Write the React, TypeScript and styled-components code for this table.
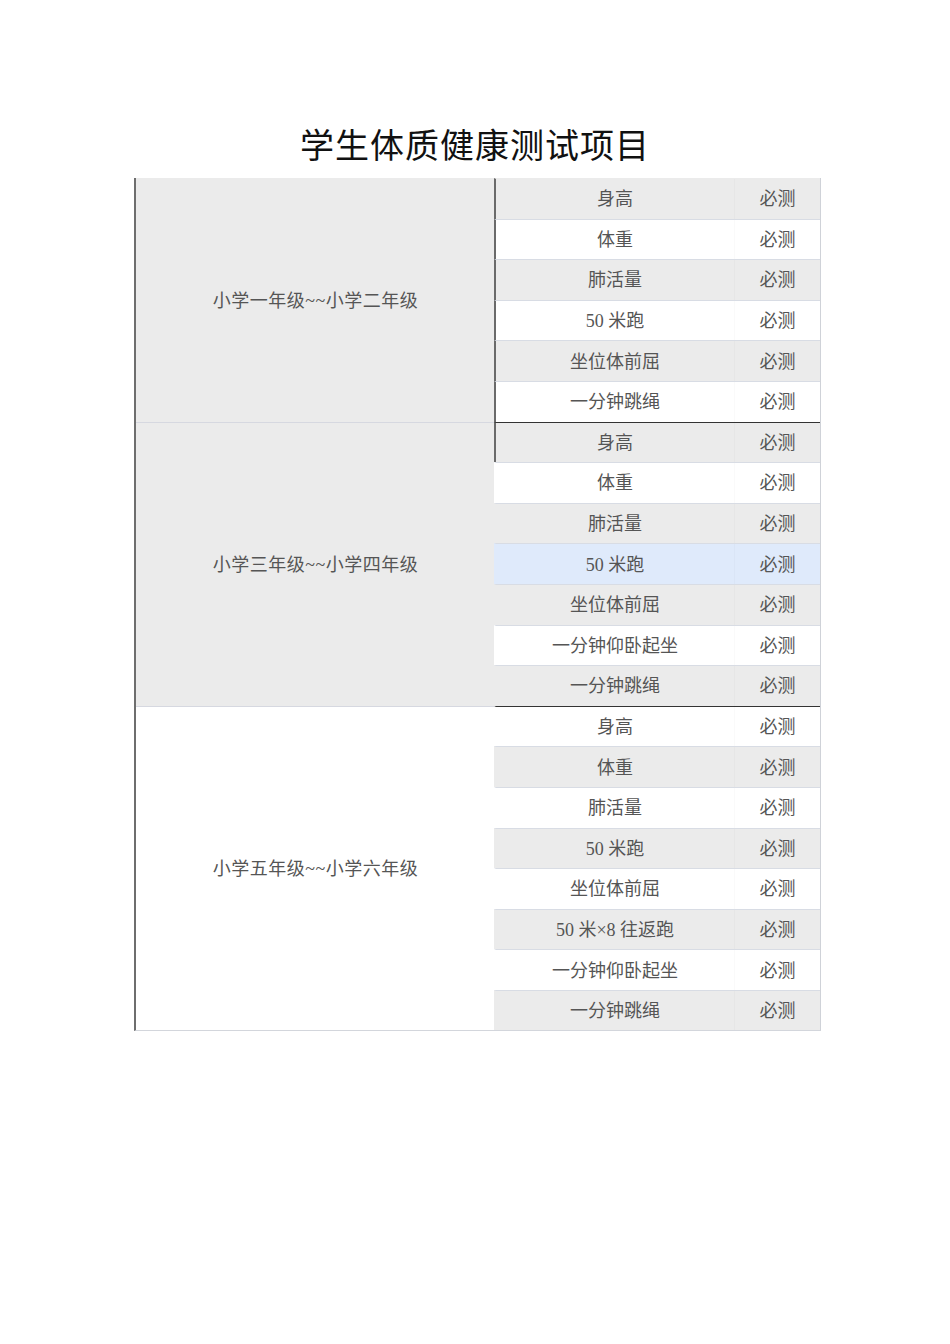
import React from 'react';
import styled, { createGlobalStyle } from 'styled-components';

const GlobalStyle = createGlobalStyle`
  body {
    margin: 0;
    background: #ffffff;
    font-family: 'Liberation Serif', 'Noto Sans CJK SC', serif;
  }
`;

const Page = styled.div`
  width: 950px;
  min-height: 1344px;
  padding-top: 127px;
  box-sizing: border-box;
`;

const Title = styled.h1`
  margin: 0;
  height: 51px;
  line-height: 40px;
  text-align: center;
  font-family: 'Liberation Serif', 'Noto Sans CJK SC', serif;
  font-weight: 400;
  font-size: 34px;
  letter-spacing: 1px;
  color: #111;
`;

const Table = styled.div`
  margin-left: 134px;
  width: 687px;
  border-left: 2px solid #6e6e6e;
  border-right: 1px solid #cfd2d8;
  border-bottom: 1px solid #d3d6dc;
  box-sizing: border-box;
  color: #555;
  font-size: 18px;
`;

const Group = styled.div`
  display: grid;
  grid-template-columns: 359px 1fr;
`;

const GroupLabel = styled.div<{ $shade: boolean; $divider: boolean }>`
  display: flex;
  align-items: center;
  justify-content: center;
  box-sizing: border-box;
  padding-bottom: 3px;
  background: ${(p) => (p.$shade ? '#ebebeb' : '#ffffff')};
  border-top: 1px solid ${(p) => (p.$divider ? '#d6d8e0' : 'transparent')};
  letter-spacing: 0.5px;
`;

const Items = styled.div`
  display: flex;
  flex-direction: column;
`;

type Tone = 'gray' | 'white' | 'blue';

const toneColor: Record<Tone, string> = {
  gray: '#ebebeb',
  white: '#ffffff',
  blue: '#dfeafb',
};

const Row = styled.div<{ $tone: Tone; $darkLeft: boolean; $darkTop: boolean; $first: boolean }>`
  display: grid;
  grid-template-columns: 238px 1fr;
  height: 40.6px;
  box-sizing: border-box;
  background: ${(p) => toneColor[p.$tone]};
  border-left: 2px solid ${(p) => (p.$darkLeft ? '#6a6a6a' : 'transparent')};
  margin-left: -1px;
  border-top: 1px solid
    ${(p) => (p.$darkTop ? '#333333' : p.$first ? 'transparent' : '#d8dce4')};
`;

const NameCell = styled.div`
  display: flex;
  align-items: center;
  justify-content: center;
  padding-bottom: 3px;
`;

const ValueCell = styled.div`
  display: flex;
  align-items: center;
  justify-content: center;
  border-left: 1px solid rgba(0, 0, 0, 0.02);
  padding-bottom: 3px;
`;

type Item = { name: string; tone: Tone };

type GroupData = {
  label: string;
  shade: boolean;
  items: Item[];
};

const groups: GroupData[] = [
  {
    label: '小学一年级~~小学二年级',
    shade: true,
    items: [
      { name: '身高', tone: 'gray' },
      { name: '体重', tone: 'white' },
      { name: '肺活量', tone: 'gray' },
      { name: '50 米跑', tone: 'white' },
      { name: '坐位体前屈', tone: 'gray' },
      { name: '一分钟跳绳', tone: 'white' },
    ],
  },
  {
    label: '小学三年级~~小学四年级',
    shade: true,
    items: [
      { name: '身高', tone: 'gray' },
      { name: '体重', tone: 'white' },
      { name: '肺活量', tone: 'gray' },
      { name: '50 米跑', tone: 'blue' },
      { name: '坐位体前屈', tone: 'gray' },
      { name: '一分钟仰卧起坐', tone: 'white' },
      { name: '一分钟跳绳', tone: 'gray' },
    ],
  },
  {
    label: '小学五年级~~小学六年级',
    shade: false,
    items: [
      { name: '身高', tone: 'white' },
      { name: '体重', tone: 'gray' },
      { name: '肺活量', tone: 'white' },
      { name: '50 米跑', tone: 'gray' },
      { name: '坐位体前屈', tone: 'white' },
      { name: '50 米×8 往返跑', tone: 'gray' },
      { name: '一分钟仰卧起坐', tone: 'white' },
      { name: '一分钟跳绳', tone: 'gray' },
    ],
  },
];

const App: React.FunctionComponent = () => (
  <Page>
    <GlobalStyle />
    <Title>学生体质健康测试项目</Title>
    <Table>
      {groups.map((g, gi) => (
        <Group key={g.label}>
          <GroupLabel $shade={g.shade} $divider={gi > 0}>
            {g.label}
          </GroupLabel>
          <Items>
            {g.items.map((item, i) => (
              <Row
                key={item.name + i}
                $tone={item.tone}
                $first={i === 0}
                $darkTop={gi > 0 && i === 0}
                $darkLeft={gi === 0 || (gi === 1 && i === 0)}
              >
                <NameCell>{item.name}</NameCell>
                <ValueCell>必测</ValueCell>
              </Row>
            ))}
          </Items>
        </Group>
      ))}
    </Table>
  </Page>
);

export default App;
